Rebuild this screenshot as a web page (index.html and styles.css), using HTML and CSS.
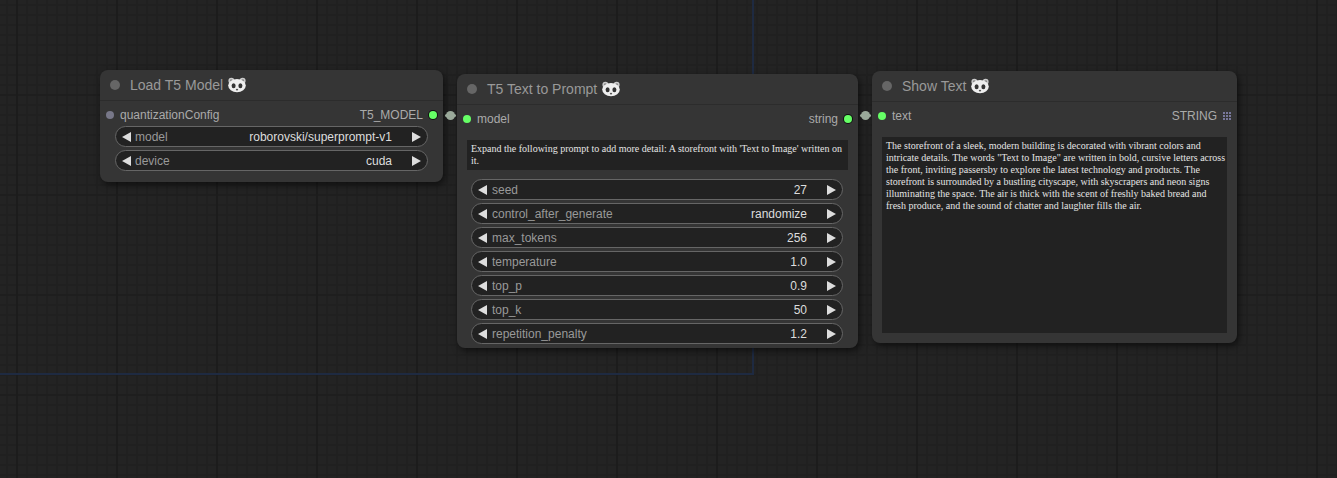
FILE: index.html
```html
<!DOCTYPE html>
<html>
<head>
    <meta charset="utf-8">
    <title>T5 Text to Prompt</title>
    <link rel="stylesheet" href="styles.css">
</head>
<body>
    <svg width="0" height="0" class="defs">
        <symbol id="panda" viewBox="0 0 18 16">
            <circle cx="3.4" cy="3.8" r="3" fill="#ccc"/>
            <circle cx="14.6" cy="3.8" r="3" fill="#ccc"/>
            <circle cx="3.2" cy="3.6" r="1.3" fill="#888"/>
            <circle cx="14.8" cy="3.6" r="1.3" fill="#888"/>
            <ellipse cx="9" cy="8.6" rx="8.8" ry="6.6" fill="#eee"/>
            <ellipse cx="5.6" cy="8.8" rx="2" ry="2.5" fill="#333"/>
            <ellipse cx="12.4" cy="8.8" rx="2" ry="2.5" fill="#333"/>
            <ellipse cx="9" cy="12.6" rx="1.2" ry="0.9" fill="#555"/>
        </symbol>
    </svg>

    <div class="canvas">
        <div class="wire wire-v"></div>
        <div class="wire wire-h"></div>

        <!-- Load T5 Model -->
        <div class="node node-load">
            <div class="node-title">
                <span class="title-dot"></span>
                <span>Load T5 Model</span>
                <svg class="panda"><use href="#panda"/></svg>
            </div>
            <div class="slots">
                <span class="slot-dot slot-off"></span>
                <span class="slot-label">quantizationConfig</span>
                <span class="slot-label slot-right">T5_MODEL</span>
                <span class="slot-dot slot-on slot-out"></span>
            </div>
            <div class="widgets">
                <div class="widget"><i class="arrow-l"></i><span class="w-name">model</span><span class="w-value">roborovski/superprompt-v1</span><i class="arrow-r"></i></div>
                <div class="widget"><i class="arrow-l"></i><span class="w-name">device</span><span class="w-value">cuda</span><i class="arrow-r"></i></div>
            </div>
        </div>

        <!-- T5 Text to Prompt -->
        <div class="node node-prompt">
            <div class="node-title">
                <span class="title-dot"></span>
                <span>T5 Text to Prompt</span>
                <svg class="panda"><use href="#panda"/></svg>
            </div>
            <div class="slots">
                <span class="slot-dot slot-on"></span>
                <span class="slot-label">model</span>
                <span class="slot-label slot-right">string</span>
                <span class="slot-dot slot-on slot-out"></span>
            </div>
            <div class="textbox textbox-prompt">Expand the following prompt to add more detail: A storefront with 'Text to Image' written on it.</div>
            <div class="widgets">
                <div class="widget"><i class="arrow-l"></i><span class="w-name">seed</span><span class="w-value">27</span><i class="arrow-r"></i></div>
                <div class="widget"><i class="arrow-l"></i><span class="w-name">control_after_generate</span><span class="w-value">randomize</span><i class="arrow-r"></i></div>
                <div class="widget"><i class="arrow-l"></i><span class="w-name">max_tokens</span><span class="w-value">256</span><i class="arrow-r"></i></div>
                <div class="widget"><i class="arrow-l"></i><span class="w-name">temperature</span><span class="w-value">1.0</span><i class="arrow-r"></i></div>
                <div class="widget"><i class="arrow-l"></i><span class="w-name">top_p</span><span class="w-value">0.9</span><i class="arrow-r"></i></div>
                <div class="widget"><i class="arrow-l"></i><span class="w-name">top_k</span><span class="w-value">50</span><i class="arrow-r"></i></div>
                <div class="widget"><i class="arrow-l"></i><span class="w-name">repetition_penalty</span><span class="w-value">1.2</span><i class="arrow-r"></i></div>
            </div>
        </div>

        <!-- Show Text -->
        <div class="node node-show">
            <div class="node-title">
                <span class="title-dot"></span>
                <span>Show Text</span>
                <svg class="panda"><use href="#panda"/></svg>
            </div>
            <div class="slots">
                <span class="slot-dot slot-on"></span>
                <span class="slot-label">text</span>
                <span class="slot-label slot-right">STRING</span>
                <span class="slot-grid"><b></b><b></b><b></b><b></b><b></b><b></b><b></b><b></b><b></b></span>
            </div>
            <div class="textbox textbox-show">The storefront of a sleek, modern building is decorated with vibrant colors and intricate details. The words "Text to Image" are written in bold, cursive letters across the front, inviting passersby to explore the latest technology and products. The storefront is surrounded by a bustling cityscape, with skyscrapers and neon signs illuminating the space. The air is thick with the scent of freshly baked bread and fresh produce, and the sound of chatter and laughter fills the air.</div>
        </div>

        <div class="link link-a"></div>
        <div class="link link-b"></div>
    </div>
</body>
</html>
```
FILE: styles.css
```css
html, body {
    margin: 0;
    height: 100%;
    overflow: hidden;
}

body {
    font-family: "Liberation Sans", Arial, sans-serif;
    font-size: 12px;
    background-color: #232323;
}

.defs {
    position: absolute;
}

.canvas {
    position: relative;
    width: 1337px;
    height: 478px;
    overflow: hidden;
    background-color: #232323;
    background-image:
        linear-gradient(to right, #1c1c1c 2px, transparent 2px),
        linear-gradient(to bottom, #1e1e1e 2px, transparent 2px),
        linear-gradient(to right, #202020 2px, transparent 2px),
        linear-gradient(to bottom, #202020 2px, transparent 2px);
    background-size: 100px 100px, 100px 100px, 10px 10px, 10px 10px;
    background-position: 16px 0, 0 94px, 6px 0, 0 4px;
}

.wire {
    position: absolute;
    background: #1e2a41;
}

.wire-v {
    left: 752px;
    top: 0;
    width: 2px;
    height: 375px;
}

.wire-h {
    left: 0;
    top: 373px;
    width: 754px;
    height: 2px;
}

.node {
    position: absolute;
    box-sizing: border-box;
    background: #353535;
    border-radius: 8px;
    box-shadow: 2px 3px 7px rgba(0, 0, 0, 0.55);
}

.node-load {
    left: 100px;
    top: 70px;
    width: 343px;
    height: 112px;
}

.node-prompt {
    left: 457px;
    top: 74px;
    width: 401px;
    height: 274px;
}

.node-show {
    left: 872px;
    top: 71px;
    width: 365px;
    height: 272px;
}

.node-title {
    display: flex;
    align-items: center;
    box-sizing: border-box;
    height: 31px;
    padding-left: 10px;
    color: #999;
    font-size: 14px;
    border-bottom: 1px solid #2c2c2c;
}

.title-dot {
    width: 10px;
    height: 10px;
    margin-right: 10px;
    border-radius: 50%;
    background: #666;
}

.panda {
    width: 18px;
    height: 16px;
    margin-left: 5px;
    filter: blur(0.3px);
}

.slots {
    display: flex;
    align-items: center;
    height: 28px;
    padding: 0 6px;
    color: #aaa;
}

.slot-dot {
    width: 8px;
    height: 8px;
    border-radius: 50%;
    margin-right: 6px;
}

.slot-off {
    background: #778;
}

.slot-on {
    background: #6f6;
}

.slot-out {
    margin: 0 0 0 6px;
    box-shadow: 0 0 0 1px #111;
}

.slot-right {
    margin-left: auto;
}

.slot-grid {
    display: grid;
    grid-template-columns: repeat(3, 2px);
    gap: 1px;
    margin: 0 0 0 6px;
}

.slot-grid b {
    height: 2px;
    background: #77779a;
}

.widgets {
    display: flex;
    flex-direction: column;
    gap: 3px;
    margin: -3px 15px 0;
}

.node-prompt .widgets {
    margin: 9px 15px 0 14px;
}

.node-prompt .w-name {
    margin-left: 5px;
}

.widget {
    display: flex;
    align-items: center;
    box-sizing: border-box;
    height: 21px;
    padding: 0 6px;
    background: #222;
    border: 1px solid #666;
    border-radius: 11px;
    color: #999;
}

.w-name {
    margin-left: 4px;
}

.w-value {
    margin-left: auto;
    margin-right: 20px;
    color: #ddd;
}

.arrow-l, .arrow-r {
    width: 0;
    height: 0;
    border-top: 5px solid transparent;
    border-bottom: 5px solid transparent;
}

.arrow-l {
    border-right: 9px solid #ddd;
}

.arrow-r {
    border-left: 9px solid #ddd;
}

.textbox {
    box-sizing: border-box;
    background: #222;
    color: #e4e4e4;
    font-family: "Liberation Serif", "Times New Roman", serif;
    font-size: 10px;
    line-height: 12px;
    padding: 3px 4px;
}

.textbox-prompt {
    height: 30px;
    margin: 7px 10px 0;
}

.textbox-show {
    height: 196px;
    margin: 7px 10px 0;
    padding-right: 0;
}

.link {
    position: absolute;
    width: 9px;
    height: 9px;
    border-radius: 50%;
    background: #9aa99a;
    box-shadow: -4px 0 0 -3px #9aa99a, 4px 0 0 -3px #9aa99a;
}

.link-a {
    left: 446px;
    top: 111px;
}

.link-b {
    left: 861px;
    top: 111px;
}
```
